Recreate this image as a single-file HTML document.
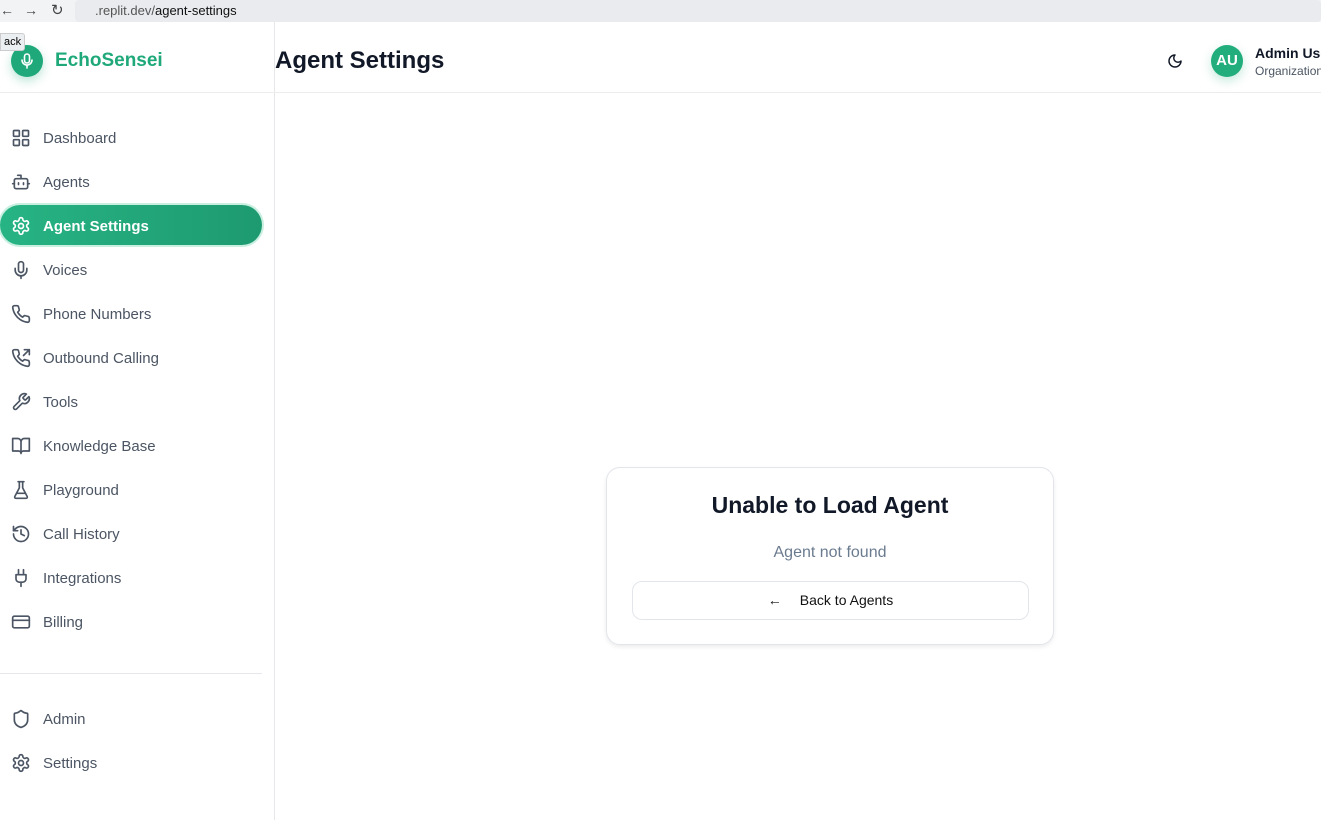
<!DOCTYPE html>
<html><head><style>
*{box-sizing:border-box;margin:0;padding:0}
body{width:1321px;height:820px;overflow:hidden;background:#fff;font-family:"Liberation Sans",sans-serif;position:relative}
.bar{position:absolute;left:0;top:0;width:1321px;height:22px;background:#f1f3f4}
.url{position:absolute;left:75px;top:0;width:1246px;height:22px;background:#e9ebee;border-radius:4px;font-size:13px;line-height:22px;padding-left:20px;color:#555}
.url b{font-weight:normal;color:#111}
.side{position:absolute;left:0;top:22px;width:275px;height:798px;border-right:1px solid #e5e7eb;background:#fff}
.logo{position:absolute;left:11px;top:45px;width:32px;height:32px;border-radius:50%;background:#1fa97a;box-shadow:0 4px 10px rgba(31,169,122,.3)}
.brand{position:absolute;left:55px;top:49px;font-size:19px;font-weight:bold;color:#1fa97a}
.hl{position:absolute;left:0;top:92px;width:1321px;height:1px;background:#ececef}
.item{position:absolute;left:0;width:262px;height:40px;display:flex;align-items:center;font-size:15px;color:#4b5563;padding-top:2px}
.item svg{margin-left:11px;margin-right:12px;width:20px;height:20px;fill:none;stroke:#4b5563;stroke-width:2;stroke-linecap:round;stroke-linejoin:round}
.act{background:linear-gradient(90deg,#27b484,#1e9a70);color:#fff;font-weight:bold;border-radius:20px;box-shadow:0 0 0 2px #c8efe0}
.act svg{stroke:#fff}
.title{position:absolute;left:275px;top:47px;font-size:24px;font-weight:bold;color:#111827}
.av{position:absolute;left:1211px;top:45px;width:32px;height:32px;border-radius:50%;background:#22ad7c;color:#fff;font-weight:bold;font-size:15px;text-align:center;line-height:32px;box-shadow:0 4px 10px rgba(31,169,122,.25)}
.card{position:absolute;left:606px;top:467px;width:448px;height:178px;border:1px solid #e2e5ea;border-radius:14px;box-shadow:0 2px 4px rgba(0,0,0,.08);text-align:center}
.btn{position:absolute;left:25px;top:113px;width:397px;height:39px;border:1px solid #e2e5ea;border-radius:10px;font-size:14px;color:#111;line-height:37px}
</style></head><body>
<div class="bar"><span style="position:absolute;left:0;top:2px;font-size:14px;color:#444">←</span><span style="position:absolute;left:24px;top:2px;font-size:14px;color:#444">→</span><span style="position:absolute;left:51px;top:1px;font-size:15px;color:#444">↻</span>
<div class="url">.replit.dev/<b>agent-settings</b></div></div>
<div class="side">
<div class="logo" style="top:23px"><svg width="32" height="32" viewBox="0 0 32 32" fill="none" stroke="#fff" stroke-width="1.6" stroke-linecap="round"><rect x="13.5" y="9" width="5" height="9" rx="2.5"/><path d="M11 15a5 5 0 0 0 10 0M16 20v3"/></svg></div>
<div class="brand" style="top:28px">EchoSensei</div>
</div>
<div style="position:absolute;left:0;top:33px;background:#eceff2;border:1px solid #ccc;font-size:11px;padding:2px 3px;border-radius:0 3px 3px 0">ack</div>
<div class="hl" style="width:1321px"></div>
<div class="item" style="top:117px"><svg viewBox="0 0 24 24"><rect x="3" y="3" width="7" height="7" rx="1"/><rect x="14" y="3" width="7" height="7" rx="1"/><rect x="14" y="14" width="7" height="7" rx="1"/><rect x="3" y="14" width="7" height="7" rx="1"/></svg>Dashboard</div>
<div class="item" style="top:161px"><svg viewBox="0 0 24 24"><path d="M12 8V4H8"/><rect x="4" y="8" width="16" height="12" rx="2"/><path d="M2 14h2M20 14h2M15 13v2M9 13v2"/></svg>Agents</div>
<div class="item act" style="top:205px"><svg viewBox="0 0 24 24"><circle cx="12" cy="12" r="3"/><path d="M12.2 2h-.4a2 2 0 0 0-2 2v.2a2 2 0 0 1-1 1.7l-.4.3a2 2 0 0 1-2 0l-.2-.1a2 2 0 0 0-2.7.7l-.2.4a2 2 0 0 0 .7 2.7l.2.1a2 2 0 0 1 1 1.7v.5a2 2 0 0 1-1 1.7l-.2.1a2 2 0 0 0-.7 2.7l.2.4a2 2 0 0 0 2.7.7l.2-.1a2 2 0 0 1 2 0l.4.3a2 2 0 0 1 1 1.7v.2a2 2 0 0 0 2 2h.4a2 2 0 0 0 2-2v-.2a2 2 0 0 1 1-1.7l.4-.3a2 2 0 0 1 2 0l.2.1a2 2 0 0 0 2.7-.7l.2-.4a2 2 0 0 0-.7-2.7l-.2-.1a2 2 0 0 1-1-1.7v-.5a2 2 0 0 1 1-1.7l.2-.1a2 2 0 0 0 .7-2.7l-.2-.4a2 2 0 0 0-2.7-.7l-.2.1a2 2 0 0 1-2 0l-.4-.3a2 2 0 0 1-1-1.7V4a2 2 0 0 0-2-2z"/></svg>Agent Settings</div>
<div class="item" style="top:249px"><svg viewBox="0 0 24 24"><rect x="9" y="2" width="6" height="13" rx="3"/><path d="M19 10v2a7 7 0 0 1-14 0v-2M12 19v3"/></svg>Voices</div>
<div class="item" style="top:293px"><svg viewBox="0 0 24 24"><path d="M22 16.9v3a2 2 0 0 1-2.2 2 19.8 19.8 0 0 1-8.6-3.1 19.5 19.5 0 0 1-6-6A19.8 19.8 0 0 1 2.1 4.200 2 2 0 0 1 4.1 2h3a2 2 0 0 1 2 1.7c.1.9.4 1.8.7 2.7a2 2 0 0 1-.5 2.1L8 9.8a16 16 0 0 0 6 6l1.3-1.3a2 2 0 0 1 2.1-.4c.9.3 1.8.6 2.7.7a2 2 0 0 1 1.7 2z"/></svg>Phone Numbers</div>
<div class="item" style="top:337px"><svg viewBox="0 0 24 24"><path d="M16 2h6v6M15 9l7-7"/><path d="M22 16.9v3a2 2 0 0 1-2.2 2 19.8 19.8 0 0 1-8.6-3.1 19.5 19.5 0 0 1-6-6A19.8 19.8 0 0 1 2.1 4.2 2 2 0 0 1 4.1 2h3a2 2 0 0 1 2 1.7c.1.9.4 1.8.7 2.7a2 2 0 0 1-.5 2.1L8 9.8a16 16 0 0 0 6 6l1.3-1.3a2 2 0 0 1 2.1-.4c.9.3 1.8.6 2.7.7a2 2 0 0 1 1.7 2z"/></svg>Outbound Calling</div>
<div class="item" style="top:381px"><svg viewBox="0 0 24 24"><path d="M14.7 6.3a1 1 0 0 0 0 1.4l1.6 1.6a1 1 0 0 0 1.4 0l3.8-3.8a6 6 0 0 1-7.9 7.9l-6.9 6.9a2.1 2.1 0 0 1-3-3l6.9-6.9a6 6 0 0 1 7.9-7.9z"/></svg>Tools</div>
<div class="item" style="top:425px"><svg viewBox="0 0 24 24"><path d="M2 3h6a4 4 0 0 1 4 4v14a3 3 0 0 0-3-3H2zM22 3h-6a4 4 0 0 0-4 4v14a3 3 0 0 1 3-3h7z"/></svg>Knowledge Base</div>
<div class="item" style="top:469px"><svg viewBox="0 0 24 24"><path d="M10 2v7.5L4.5 20a1.5 1.5 0 0 0 1.3 2h12.4a1.5 1.5 0 0 0 1.3-2L14 9.5V2M8.5 2h7M7 16h10"/></svg>Playground</div>
<div class="item" style="top:513px"><svg viewBox="0 0 24 24"><path d="M3 12a9 9 0 1 0 9-9 9.8 9.8 0 0 0-6.7 2.7L3 8"/><path d="M3 3v5h5M12 7v5l4 2"/></svg>Call History</div>
<div class="item" style="top:557px"><svg viewBox="0 0 24 24"><path d="M12 22v-5M9 8V2M15 8V2M18 8v5a4 4 0 0 1-4 4h-4a4 4 0 0 1-4-4V8z"/></svg>Integrations</div>
<div class="item" style="top:601px"><svg viewBox="0 0 24 24"><rect x="2" y="5" width="20" height="14" rx="2"/><path d="M2 10h20"/></svg>Billing</div>
<div style="position:absolute;left:0;top:673px;width:262px;height:1px;background:#e5e7eb"></div>
<div class="item" style="top:698px"><svg viewBox="0 0 24 24"><path d="M20 13c0 5-3.5 7.5-7.7 9a1 1 0 0 1-.7 0C7.5 20.5 4 18 4 13V6a1 1 0 0 1 1-1c2 0 4.5-1.2 6.2-2.7a1.2 1.2 0 0 1 1.5 0C14.5 3.8 17 5 19 5a1 1 0 0 1 1 1z"/></svg>Admin</div>
<div class="item" style="top:742px"><svg viewBox="0 0 24 24"><circle cx="12" cy="12" r="3"/><path d="M12.2 2h-.4a2 2 0 0 0-2 2v.2a2 2 0 0 1-1 1.7l-.4.3a2 2 0 0 1-2 0l-.2-.1a2 2 0 0 0-2.7.7l-.2.4a2 2 0 0 0 .7 2.7l.2.1a2 2 0 0 1 1 1.7v.5a2 2 0 0 1-1 1.7l-.2.1a2 2 0 0 0-.7 2.7l.2.4a2 2 0 0 0 2.7.7l.2-.1a2 2 0 0 1 2 0l.4.3a2 2 0 0 1 1 1.7v.2a2 2 0 0 0 2 2h.4a2 2 0 0 0 2-2v-.2a2 2 0 0 1 1-1.7l.4-.3a2 2 0 0 1 2 0l.2.1a2 2 0 0 0 2.7-.7l.2-.4a2 2 0 0 0-.7-2.7l-.2-.1a2 2 0 0 1-1-1.7v-.5a2 2 0 0 1 1-1.7l.2-.1a2 2 0 0 0 .7-2.7l-.2-.4a2 2 0 0 0-2.7-.7l-.2.1a2 2 0 0 1-2 0l-.4-.3a2 2 0 0 1-1-1.7V4a2 2 0 0 0-2-2z"/></svg>Settings</div>
<div class="title">Agent Settings</div>
<svg style="position:absolute;left:1167px;top:53px" width="16" height="16" viewBox="0 0 24 24" fill="none" stroke="#111827" stroke-width="2.2" stroke-linecap="round" stroke-linejoin="round"><path d="M12 3a6 6 0 0 0 9 9 9 9 0 1 1-9-9z"/></svg>
<div class="av">AU</div>
<div style="position:absolute;left:1255px;top:45px;font-size:14px;color:#111827;font-weight:bold;white-space:nowrap">Admin User</div>
<div style="position:absolute;left:1255px;top:64px;font-size:12px;color:#4b5563;white-space:nowrap">Organization</div>
<div class="card">
<div style="position:absolute;left:0;right:0;top:24px;font-size:23px;font-weight:bold;color:#111827">Unable to Load Agent</div>
<div style="position:absolute;left:0;right:0;top:76px;font-size:16px;color:#6b7b8f">Agent not found</div>
<div class="btn"><span style="margin-right:18px">←</span>Back to Agents</div>
</div>
</body></html>
